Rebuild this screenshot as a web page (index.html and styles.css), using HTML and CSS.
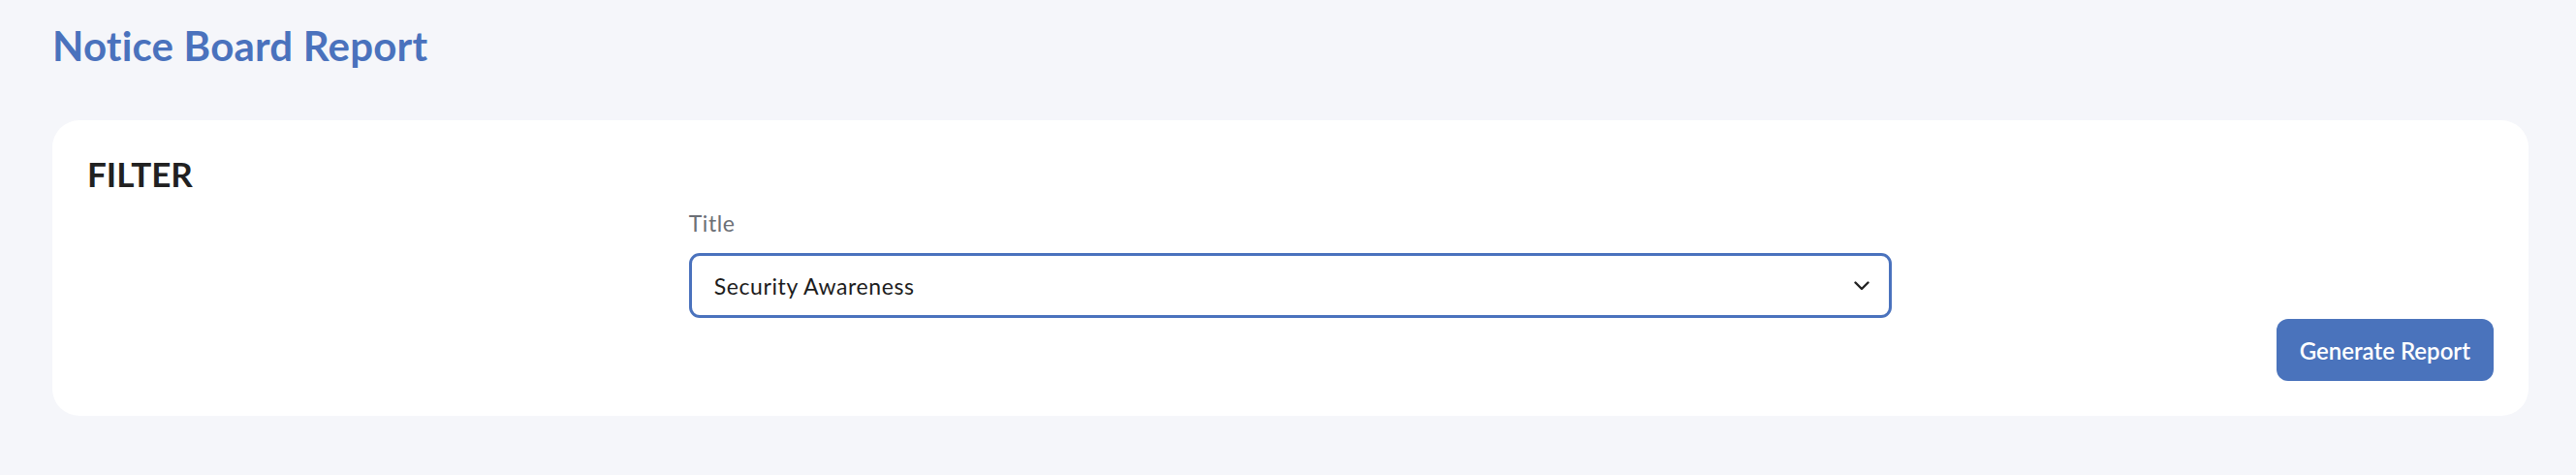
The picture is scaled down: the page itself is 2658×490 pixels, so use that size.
FILE: index.html
```html
<!DOCTYPE html>
<html lang="en">
<head>
<meta charset="utf-8">
<title>Notice Board Report</title>
<link rel="stylesheet" href="styles.css">
</head>
<body>
<main class="page">
  <h1 class="page-title">Notice Board Report</h1>
  <section class="card">
    <h2 class="card-title">FILTER</h2>
    <div class="field">
      <label class="field-label">Title</label>
      <div class="select">
        <span class="select-value">Security Awareness</span>
        <svg class="chevron" width="16" height="10" viewBox="0 0 16 10" aria-hidden="true">
          <path d="M1.5 1.5 L8 8 L14.5 1.5" fill="none" stroke="#222" stroke-width="2.4" stroke-linecap="round" stroke-linejoin="round"/>
        </svg>
      </div>
    </div>
    <div class="actions">
      <button class="btn-primary" type="button">Generate Report</button>
    </div>
  </section>
</main>
</body>
</html>
```
FILE: styles.css
```css
* { box-sizing: border-box; }
html, body { margin: 0; padding: 0; }
body {
  background: #f5f6fa;
  font-family: Lato, "Noto Sans", sans-serif;
  color: #1f1f1f;
}
.page {
  padding: 22px 49px 0 54px;
}
.page-title {
  margin: 0;
  font-size: 42px;
  line-height: 1.2;
  font-weight: 700;
  letter-spacing: 0.2px;
  color: #4a72bd;
}
.card {
  margin-top: 52px;
  background: #ffffff;
  border-radius: 28px;
  padding: 36px;
}
.card-title {
  margin: 0;
  font-size: 35px;
  line-height: 38px;
  font-weight: 700;
  color: #212121;
}
.field {
  width: 50%;
  margin: 19px auto 0;
  display: flex;
  flex-direction: column;
}
.field-label {
  font-size: 23px;
  line-height: 26px;
  letter-spacing: 0.6px;
  color: #6b6f76;
  margin-bottom: 18px;
}
.select {
  height: 67px;
  border: 3px solid #4a72bd;
  border-radius: 11px;
  display: flex;
  align-items: center;
  justify-content: space-between;
  padding: 0 20px 0 23px;
}
.select-value {
  font-size: 23px;
  letter-spacing: 0.6px;
  color: #1c1c1c;
}
.chevron { display: block; }
.actions {
  display: flex;
  justify-content: flex-end;
  margin-top: 1px;
}
.btn-primary {
  height: 64px;
  padding: 0 24px;
  border: none;
  border-radius: 12px;
  background: #4a73bc;
  color: #ffffff;
  font-family: Lato, "Noto Sans", sans-serif;
  font-size: 24px;
  font-weight: 600;
}
```
